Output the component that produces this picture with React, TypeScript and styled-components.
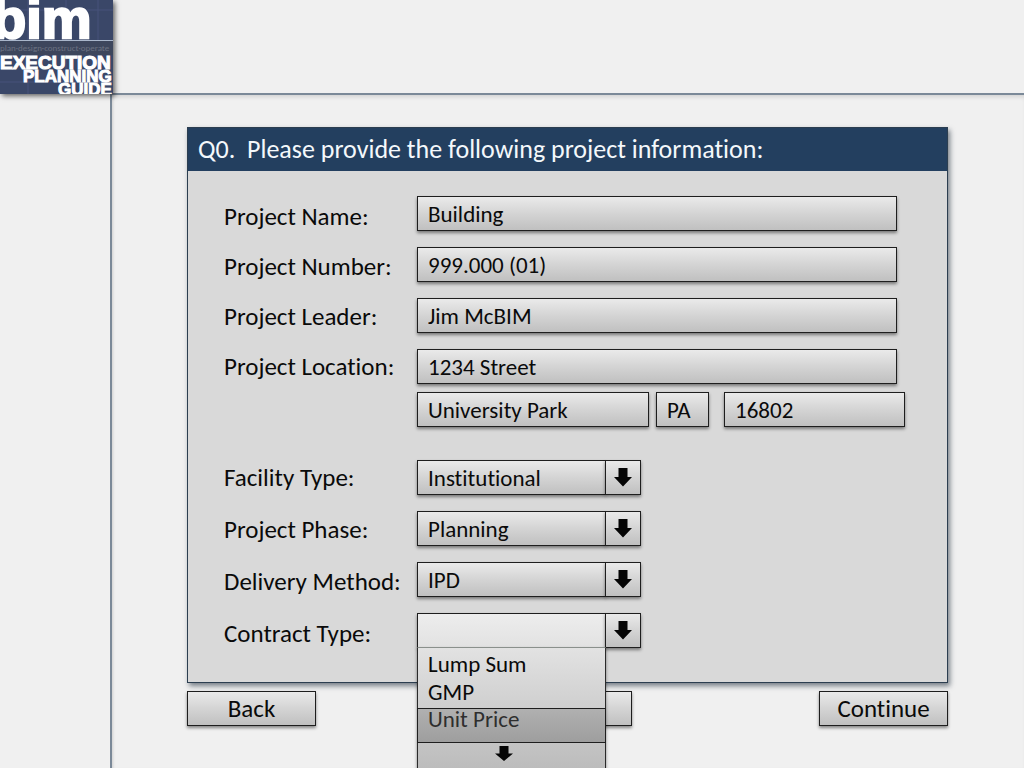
import React from "react";
import styled, { createGlobalStyle, css } from "styled-components";

const GlobalStyle = createGlobalStyle`
  *, *::before, *::after { box-sizing: border-box; }
  body {
    margin: 0;
    background: #f0f0f0;
    color: #0a0a0a;
    font-family: Carlito, Lato, "Noto Sans", sans-serif;
    font-variant-ligatures: none;
    overflow: hidden;
  }
`;

const surface = css`
  border: 1px solid #1e1e1e;
  background: linear-gradient(#eaeaea, #d4d4d4 50%, #c0c0c0);
  box-shadow: 0 2px 3px rgba(0, 0, 0, 0.45);
`;

const Page = styled.div`
  display: flex;
  flex-direction: column;
  min-height: 100vh;
`;

const Header = styled.header`
  height: 93px;
`;

const Logo = styled.svg`
  position: relative;
  display: block;
  width: 113px;
  height: 94px;
  box-shadow: 2px 2px 5px rgba(0, 0, 0, 0.6);
`;

const Main = styled.main`
  flex: 1;
  margin-left: 110px;
  padding: 32px 76px 0 75px;
  border-top: 2px solid #7b8998;
  border-left: 2px solid #7b8998;
  box-shadow: inset 0 4px 4px -2px rgba(0, 0, 0, 0.12),
    inset 3px 0 3px -2px rgba(0, 0, 0, 0.12);
`;

const Panel = styled.section`
  border: 1px solid #2c3e50;
  background: #d9d9d9;
  box-shadow: 2px 3px 5px rgba(20, 35, 50, 0.55);
`;

const PanelTitle = styled.h1`
  margin: 0;
  padding: 0 10px 1px;
  background: #233f5f;
  color: #f4f8fb;
  font-size: 26px;
  font-weight: 400;
  line-height: 42px;
  white-space: pre-wrap;
`;

const Group = styled.div`
  display: grid;
  grid-template-columns: 193px 1fr;
  padding: 25px 42px 33px 36px;
`;

const MenuGroup = styled(Group)`
  padding-top: 0;
  padding-bottom: 31px;
`;

const Labels = styled.div<{ $gap: number; $top: number }>`
  display: flex;
  flex-direction: column;
  gap: ${(p) => p.$gap}px;
  padding-top: ${(p) => p.$top}px;
`;

const Label = styled.label`
  font-size: 25px;
  line-height: 35px;
  white-space: nowrap;
`;

const Fields = styled.div`
  display: flex;
  flex-direction: column;
  gap: 16px;
`;

const Address = styled.div`
  display: flex;
  flex-direction: column;
  gap: 8px;
`;

const CityLine = styled.div`
  display: grid;
  grid-template-columns: 232px 53px 1fr;
  column-gap: 7px;
`;

const Input = styled.input`
  ${surface}
  width: 100%;
  height: 35px;
  padding: 0 10px;
  border-radius: 0;
  outline: 0;
  color: inherit;
  font: inherit;
  font-variant-ligatures: none;
  font-size: 23px;
`;

const Wide = styled.div`
  padding-right: 8px;
`;

const Zip = styled.div`
  padding-left: 8px;
`;

const Picker = styled.div`
  position: relative;
  display: flex;
  width: 224px;
`;

const Select = styled.select<{ $open?: boolean }>`
  ${surface}
  ${(p) => p.$open && "background: linear-gradient(#ededed, #e2e2e2);"}
  appearance: none;
  width: 189px;
  height: 35px;
  padding: 0 10px;
  border-radius: 0;
  outline: 0;
  color: inherit;
  font: inherit;
  font-variant-ligatures: none;
  font-size: 23px;
`;

const ArrowButton = styled.button`
  ${surface}
  display: grid;
  place-items: center;
  flex: 1;
  height: 35px;
  margin-left: -1px;
  padding: 0;
`;

const Menu = styled.div`
  position: absolute;
  top: 34px;
  left: 0;
  width: 189px;
  border: 1px solid #2a2a2a;
  border-top-color: #8a908c;
  background: linear-gradient(#e2e2e2, #bcbcbc);
  box-shadow: 0 2px 3px rgba(0, 0, 0, 0.45);
`;

const Options = styled.ul`
  margin: 0;
  padding: 2px 0 1px;
  list-style: none;
`;

const Option = styled.li<{ $active?: boolean }>`
  padding: 0 10px;
  font-size: 23px;
  line-height: 28px;
  ${(p) =>
    p.$active &&
    css`
      height: 35px;
      margin: 2px -1px 0;
      padding: 0 10px;
      border: 1px solid #1e1e1e;
      background: linear-gradient(#b0b0b0, #9e9e9e);
      color: #2e2e2e;
      line-height: 20px;
    `}
`;

const ScrollButton = styled.button`
  display: grid;
  place-items: center;
  width: 100%;
  height: 24px;
  padding: 0 16px 6px 0;
  border: 0;
  background: transparent;
`;

const Actions = styled.nav`
  display: flex;
  justify-content: space-between;
  padding-top: 8px;
`;

const Button = styled.button`
  ${surface}
  width: 129px;
  height: 35px;
  padding: 0;
  color: inherit;
  font: inherit;
  font-variant-ligatures: none;
  font-size: 25px;
  line-height: 32px;
`;

const DownArrow = () => (
  <svg width="18" height="19" viewBox="0 0 18 19" aria-hidden="true">
    <path d="M4.5 0h9v9H18l-9 9.5L0 9h4.5z" fill="#050505" />
  </svg>
);

const ShortArrow = () => (
  <svg width="18" height="15" viewBox="0 0 18 15" aria-hidden="true">
    <path d="M4.5 0h9v7.5H18L9 15 0 7.5h4.5z" fill="#050505" />
  </svg>
);

const BimLogo = () => (
  <Logo viewBox="0 0 113 94" role="img" aria-label="BIM Execution Planning Guide">
    <rect width="113" height="94" fill="#3a4768" />
    <path d="M28 0v94M66 0v94M98 0v94M0 82h113M0 10h113" stroke="#46527a" strokeWidth="1" />
    <rect y="41" width="113" height="14" fill="#3d465c" />
    <path d="M0 40.5h113" stroke="#a9b6cb" />
    <g fontFamily="Liberation Sans, Arial, sans-serif" fontWeight="700" fill="#fff" stroke="#fff">
      <text x="-8" y="38" fontSize="56" strokeWidth="2.4">bim</text>
      <text x="0" y="69" fontSize="19" strokeWidth="1.1">EXECUTION</text>
      <text x="23" y="82" fontSize="17" strokeWidth="1">PLANNING</text>
      <text x="58" y="95" fontSize="17" strokeWidth="1">GUIDE</text>
    </g>
    <text x="0" y="51" fontFamily="Carlito, Lato, sans-serif" fontSize="9" fill="#6c7282">
      plan·design·construct·operate
    </text>
  </Logo>
);

const projectFields = [
  { id: "name", label: "Project Name:", value: "Building" },
  { id: "number", label: "Project Number:", value: "999.000 (01)" },
  { id: "leader", label: "Project Leader:", value: "Jim McBIM" },
];

const pickers = [
  { id: "facility", label: "Facility Type:", value: "Institutional" },
  { id: "phase", label: "Project Phase:", value: "Planning" },
  { id: "delivery", label: "Delivery Method:", value: "IPD" },
];

export default function App() {
  return (
    <Page>
      <GlobalStyle />
      <Header>
        <BimLogo />
      </Header>
      <Main>
        <Panel>
          <PanelTitle>Q0.  Please provide the following project information:</PanelTitle>
          <Group>
            <Labels $gap={15} $top={3}>
              {projectFields.map((f) => (
                <Label key={f.id} htmlFor={f.id}>{f.label}</Label>
              ))}
              <Label htmlFor="street">Project Location:</Label>
            </Labels>
            <Fields>
              {projectFields.map((f) => (
                <Wide key={f.id}>
                  <Input id={f.id} defaultValue={f.value} />
                </Wide>
              ))}
              <Address>
                <Wide>
                  <Input id="street" defaultValue="1234 Street" />
                </Wide>
                <CityLine>
                  <Input aria-label="City" defaultValue="University Park" />
                  <Input aria-label="State" defaultValue="PA" />
                  <Zip>
                    <Input aria-label="Zip code" defaultValue="16802" />
                  </Zip>
                </CityLine>
              </Address>
            </Fields>
          </Group>
          <MenuGroup>
            <Labels $gap={17} $top={0}>
              {pickers.map((p) => (
                <Label key={p.id} htmlFor={p.id}>{p.label}</Label>
              ))}
              <Label htmlFor="contract">Contract Type:</Label>
            </Labels>
            <Fields>
              {pickers.map((p) => (
                <Picker key={p.id}>
                  <Select id={p.id} defaultValue={p.value}>
                    <option>{p.value}</option>
                  </Select>
                  <ArrowButton type="button" aria-label={`Open ${p.label}`}>
                    <DownArrow />
                  </ArrowButton>
                </Picker>
              ))}
              <Picker>
                <Select id="contract" defaultValue="" $open>
                  <option value="" />
                </Select>
                <ArrowButton type="button" aria-label="Close Contract Type">
                  <DownArrow />
                </ArrowButton>
                <Menu>
                  <Options>
                    <Option>Lump Sum</Option>
                    <Option>GMP</Option>
                    <Option $active>Unit Price</Option>
                  </Options>
                  <ScrollButton type="button" aria-label="More options">
                    <ShortArrow />
                  </ScrollButton>
                </Menu>
              </Picker>
            </Fields>
          </MenuGroup>
        </Panel>
        <Actions>
          <Button type="button">Back</Button>
          <Button type="button" aria-label="Reset" />
          <Button type="button">Continue</Button>
        </Actions>
      </Main>
    </Page>
  );
}
